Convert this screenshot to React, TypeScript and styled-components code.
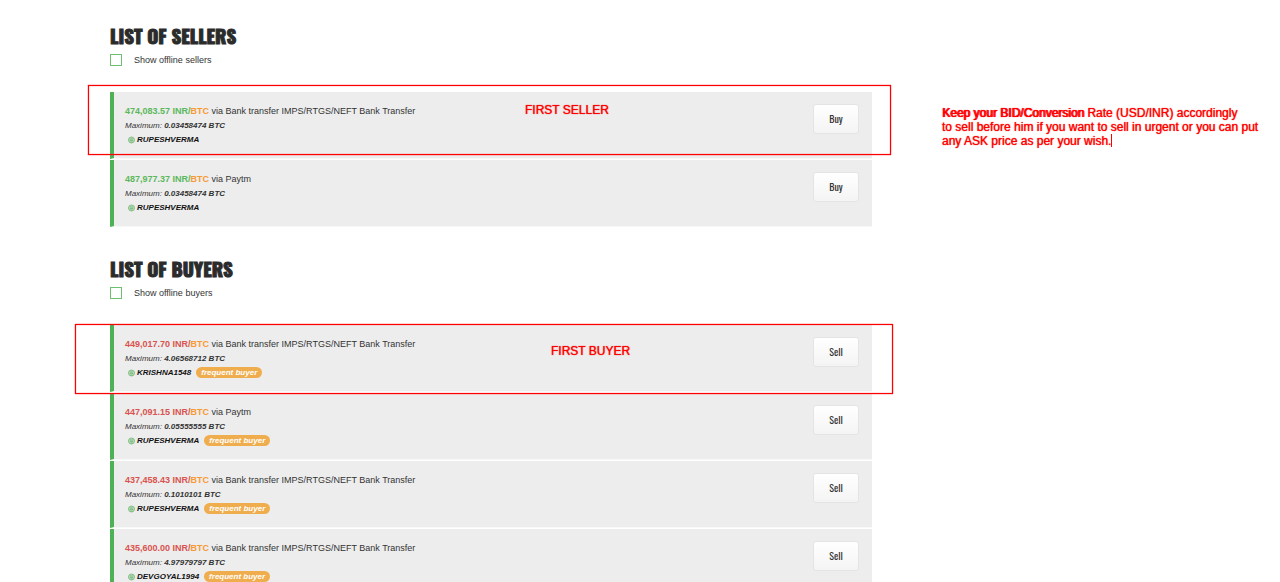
import React from "react";
import styled, { createGlobalStyle } from "styled-components";

const GlobalStyle = createGlobalStyle`
  * { box-sizing: border-box; }
  html { scrollbar-width: none; }
  body {
    margin: 0;
    background: #fff;
    color: #333;
    font-family: "Liberation Sans", Arial, sans-serif;
  }
`;

const NARROW = 'Oswald, "Roboto Condensed", Roboto, "Liberation Sans", sans-serif';

const Page = styled.div`
  display: flex;
  align-items: flex-start;
  gap: 70px;
  padding: 24px 0 0 110px;
`;

const Market = styled.main`
  flex: 1;
  min-width: 0;
  display: flex;
  flex-direction: column;
  gap: 29px;
`;

const Heading = styled.h2`
  margin: 0;
  font: bold 19px/22px ${NARROW};
  color: #2b2b2b;
  -webkit-text-stroke: 1px #2b2b2b;
  white-space: nowrap;
`;

const Toggle = styled.label`
  display: flex;
  align-items: center;
  gap: 12px;
  margin: 7px 0 25px;
  font-size: 9px;
  line-height: 14px;
`;

const Checkbox = styled.input`
  appearance: none;
  width: 12px;
  height: 12px;
  margin: 0;
  border: 1px solid #6cc070;
  background: #fff;
  &:checked { background: #5cb85c; }
`;

const List = styled.ul`
  margin: 0;
  padding: 0;
  list-style: none;
`;

const Row = styled.li`
  position: relative;
  display: flex;
  justify-content: space-between;
  align-items: flex-start;
  min-height: 67px;
  margin-bottom: 1px;
  padding: 12px 13px 8px 11px;
  border-left: 4px solid #4fb155;
  border-bottom: 1px solid #f8f8f8;
  background: #ededed;
`;

const Offer = styled.div`
  line-height: 14px;
  white-space: nowrap;
`;

const Title = styled.div`
  margin-bottom: 1px;
  font-size: 9px;
`;

const Price = styled.strong<{ $side: Side }>`
  color: ${(p) => (p.$side === "seller" ? "#5cb85c" : "#d9534f")};
`;

const Coin = styled.strong`
  color: #f89a33;
`;

const Limit = styled.div`
  font-size: 8px;
  font-style: italic;
`;

const Trader = styled.div`
  display: flex;
  align-items: center;
  gap: 2px;
  height: 13px;
  padding-left: 3px;
  font-size: 8px;
  font-style: italic;
`;

const Name = styled.a`
  color: #111;
  font-weight: bold;
  text-decoration: none;
`;

const Badge = styled.span`
  margin-left: 3px;
  padding: 0 5px;
  border-radius: 6px;
  background: #f0ad4e;
  color: #fff;
  font-size: 8px;
  font-weight: bold;
  line-height: 11px;
`;

const TradeButton = styled.button`
  width: 46px;
  height: 30px;
  padding: 0;
  border: 1px solid #e4e4e4;
  border-radius: 3px;
  background: linear-gradient(#fff, #f4f4f4);
  color: #333;
  font: 10px/28px ${NARROW};
`;

const Highlight = styled.div<{ $side: Side }>`
  position: absolute;
  z-index: 1;
  pointer-events: none;
  inset: ${(p) => (p.$side === "seller" ? "-7px -19px 3px -26px" : "-1px -21px -3px -39px")};
  border: 1px solid #f00;
  box-shadow: 0 0 1px #f00, inset 0 0 1px #f00;
`;

const Tag = styled.span<{ $side: Side }>`
  position: absolute;
  top: ${(p) => (p.$side === "seller" ? "17px" : "19px")};
  left: ${(p) => (p.$side === "seller" ? "436px" : "475px")};
  color: #f00;
  font-size: 12px;
  line-height: 14px;
  white-space: nowrap;
  text-shadow: 0 0 1px #f00;
`;

const Note = styled.aside`
  width: 338px;
  margin-top: 82px;
  color: #f00;
  font-size: 12px;
  line-height: 14px;
  white-space: nowrap;
  text-shadow: 0 0 1px #f00;
`;

const Strong = styled.span`
  text-shadow: 0 0 1px #f00, 1px 0 0 #f00;
`;

const Caret = styled.span`
  display: inline-block;
  height: 13px;
  border-left: 1px solid #f00;
  vertical-align: top;
`;

type Side = "seller" | "buyer";
type Entry = { price: string; method: string; max: string; name: string };

const BANK = "Bank transfer IMPS/RTGS/NEFT Bank Transfer";

const SELLERS: Entry[] = [
  { price: "474,083.57", method: BANK, max: "0.03458474", name: "RUPESHVERMA" },
  { price: "487,977.37", method: "Paytm", max: "0.03458474", name: "RUPESHVERMA" },
];

const BUYERS: Entry[] = [
  { price: "449,017.70", method: BANK, max: "4.06568712", name: "KRISHNA1548" },
  { price: "447,091.15", method: "Paytm", max: "0.05555555", name: "RUPESHVERMA" },
  { price: "437,458.43", method: BANK, max: "0.1010101", name: "RUPESHVERMA" },
  { price: "435,600.00", method: BANK, max: "4.97979797", name: "DEVGOYAL1994" },
];

const OnlineIcon = () => (
  <svg width="7" height="8" viewBox="0 0 14 16" aria-hidden="true">
    <circle cx="7" cy="8" r="6" fill="#b9dabb" stroke="#83bf87" strokeWidth="2" />
    <path d="M4 6h6M4 9h6M5 12h4" stroke="#6fb474" strokeWidth="1.5" />
  </svg>
);

function Offers({ side, entries }: { side: Side; entries: Entry[] }) {
  return (
    <section>
      <Heading>LIST OF {side === "seller" ? "SELLERS" : "BUYERS"}</Heading>
      <Toggle>
        <Checkbox type="checkbox" />
        Show offline {side}s
      </Toggle>
      <List>
        {entries.map((e, i) => (
          <Row key={e.price}>
            <Offer>
              <Title>
                <Price $side={side}>{e.price} INR/</Price>
                <Coin>BTC</Coin> via {e.method}
              </Title>
              <Limit>
                Maximum: <b>{e.max} BTC</b>
              </Limit>
              <Trader>
                <OnlineIcon />
                <Name href="#">{e.name}</Name>
                {side === "buyer" && <Badge>frequent buyer</Badge>}
              </Trader>
            </Offer>
            <TradeButton type="button">{side === "seller" ? "Buy" : "Sell"}</TradeButton>
            {i === 0 && (
              <Highlight $side={side}>
                <Tag $side={side}>FIRST {side === "seller" ? "SELLER" : "BUYER"}</Tag>
              </Highlight>
            )}
          </Row>
        ))}
      </List>
    </section>
  );
}

export default function App() {
  return (
    <>
      <GlobalStyle />
      <Page>
        <Market>
          <Offers side="seller" entries={SELLERS} />
          <Offers side="buyer" entries={BUYERS} />
        </Market>
        <Note>
          <Strong>Keep your BID/Conversion</Strong> Rate (USD/INR) accordingly
          <br />
          to sell before him if you want to sell in urgent or you can put
          <br />
          any ASK price as per your wish.
          <Caret />
        </Note>
      </Page>
    </>
  );
}
